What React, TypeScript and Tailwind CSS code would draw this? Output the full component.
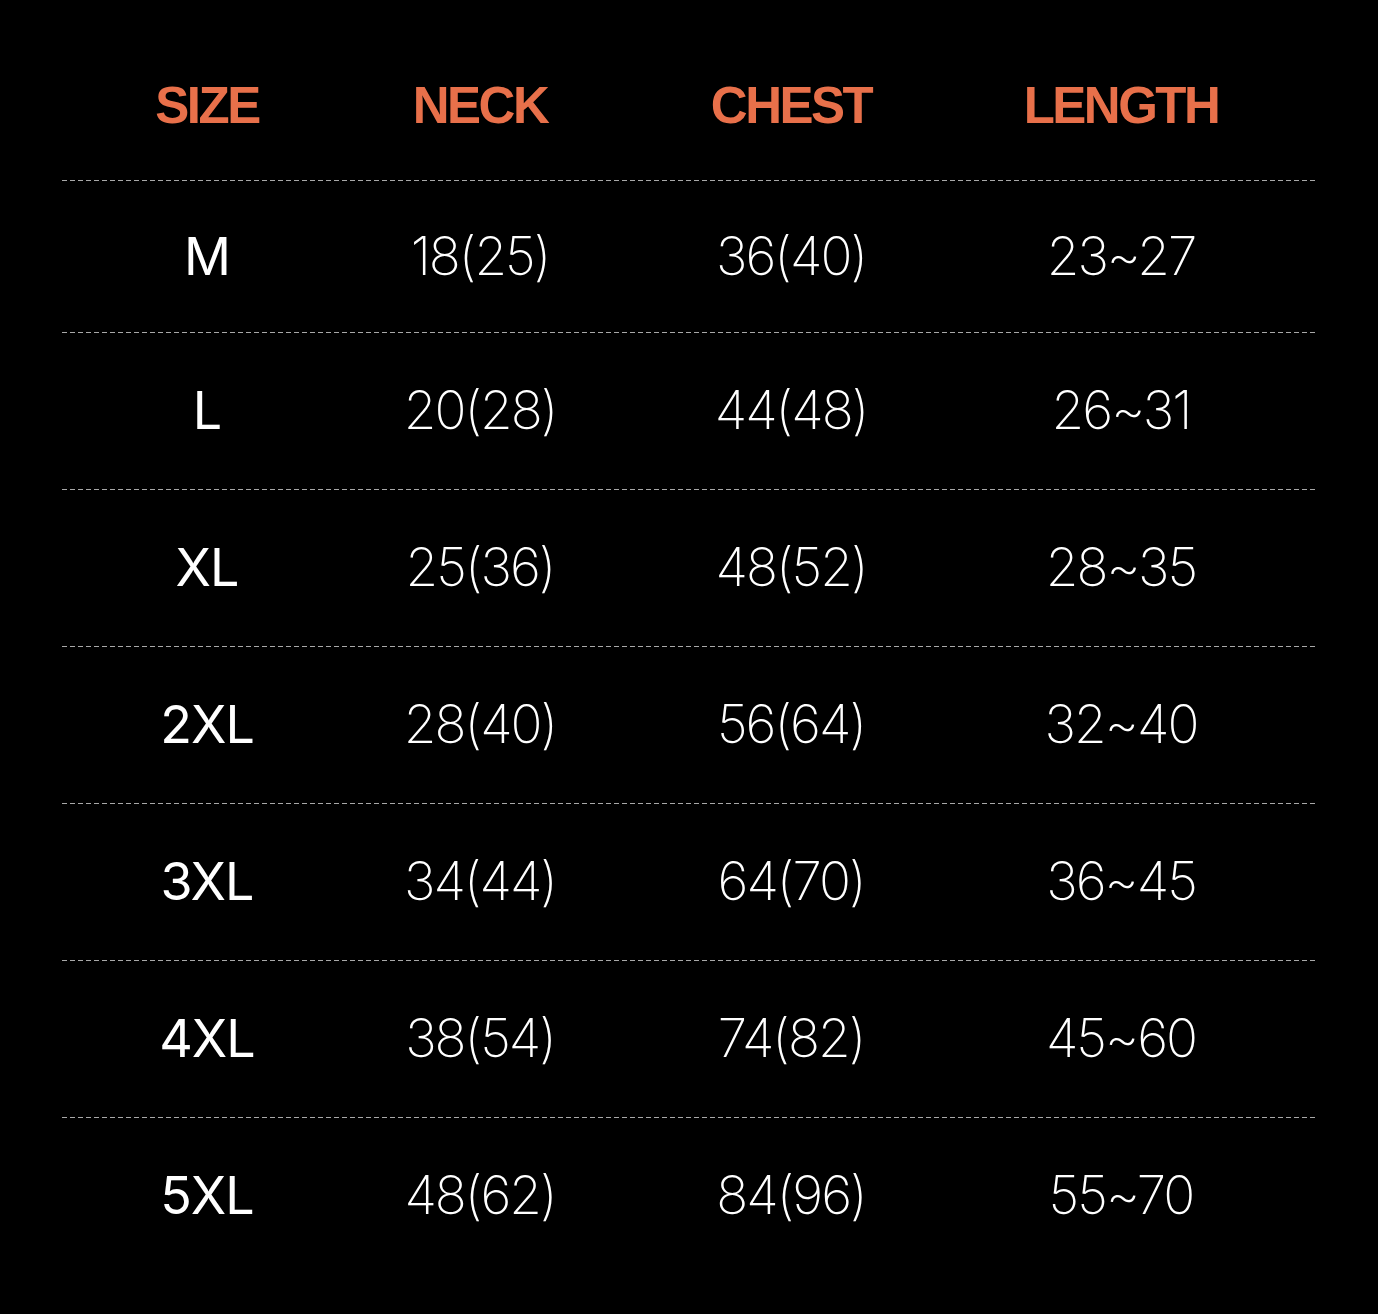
const rows = [
  { size: "M", neck: "18(25)", chest: "36(40)", length: "23~27" },
  { size: "L", neck: "20(28)", chest: "44(48)", length: "26~31" },
  { size: "XL", neck: "25(36)", chest: "48(52)", length: "28~35" },
  { size: "2XL", neck: "28(40)", chest: "56(64)", length: "32~40" },
  { size: "3XL", neck: "34(44)", chest: "64(70)", length: "36~45" },
  { size: "4XL", neck: "38(54)", chest: "74(82)", length: "45~60" },
  { size: "5XL", neck: "48(62)", chest: "84(96)", length: "55~70" },
];

const cols = "grid grid-cols-[290px_256px_366px_294px]";

function Divider() {
  return (
    <div className="h-px w-full bg-[repeating-linear-gradient(90deg,#a8a8a8_0px,#a8a8a8_5px,transparent_5px,transparent_8px)]" />
  );
}

export default function App() {
  return (
    <div className="min-h-[1314px] w-full bg-black pl-[62px] pr-[62px] font-['Inter','Noto_Sans',sans-serif]">
      <div className={`${cols} h-[180px] items-center pt-[32px] text-[51px] font-bold tracking-[-2.5px] text-[#e8704a] font-['Liberation_Sans',sans-serif]`}>
        <div className="text-center">SIZE</div>
        <div className="text-center">NECK</div>
        <div className="text-center">CHEST</div>
        <div className="text-center">LENGTH</div>
      </div>
      {rows.map((r, i) => (
        <div key={r.size}>
          <Divider />
          <div className={`${cols} items-center ${i === 0 ? "h-[151px]" : "h-[156px]"}`}>
            <div className="text-center text-[52px] font-normal tracking-[-1px] text-white">{r.size}</div>
            <div className="text-center text-[53px] font-[200] tracking-[-2px] text-white">{r.neck}</div>
            <div className="text-center text-[53px] font-[200] tracking-[-2px] text-white">{r.chest}</div>
            <div className="text-center text-[53px] font-[200] tracking-[-2px] text-white">{r.length}</div>
          </div>
        </div>
      ))}
    </div>
  );
}
